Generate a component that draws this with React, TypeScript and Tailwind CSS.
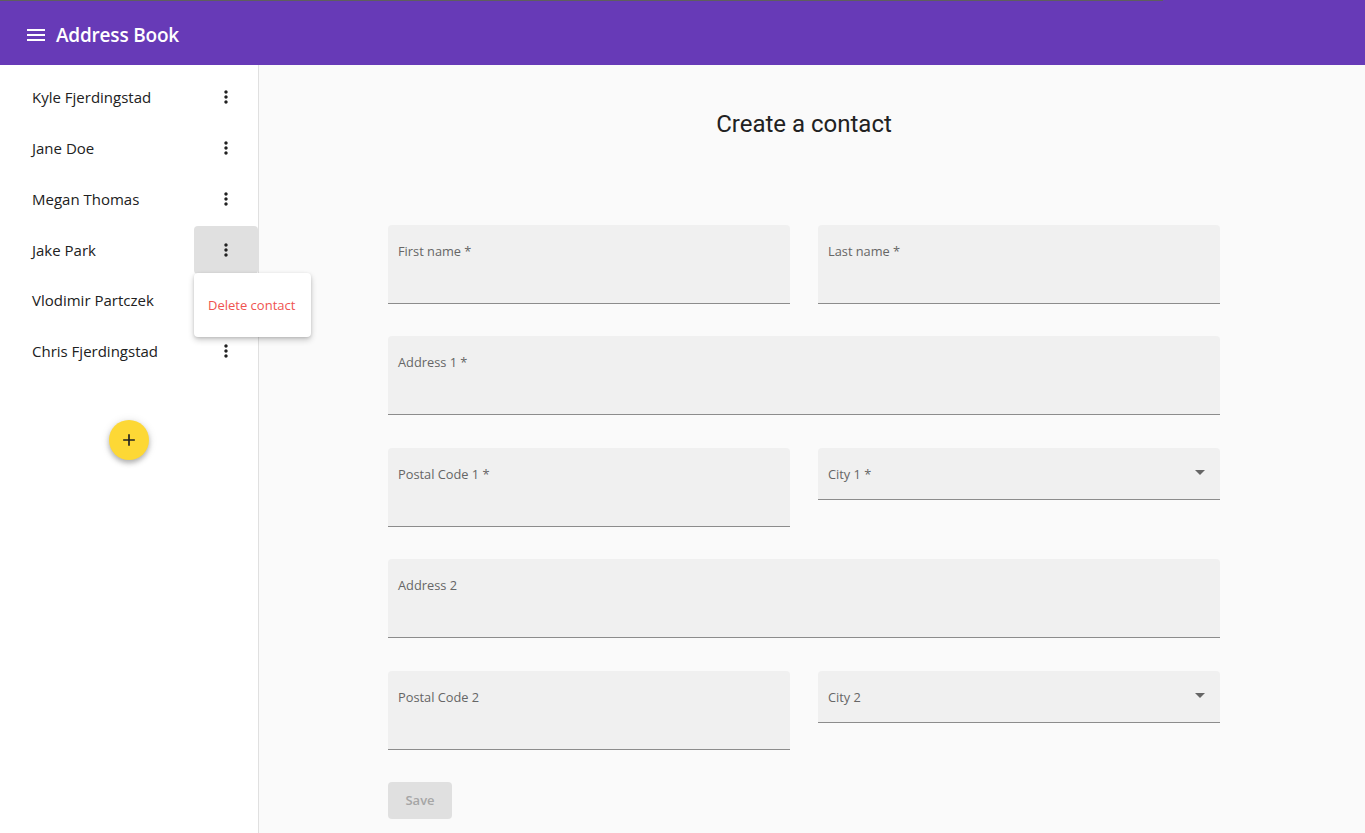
import React from "react";

const CONTACTS = [
  "Kyle Fjerdingstad",
  "Jane Doe",
  "Megan Thomas",
  "Jake Park",
  "Vlodimir Partczek",
  "Chris Fjerdingstad",
];

const SANS = "font-['Open_Sans',sans-serif]";

function MoreVert() {
  return (
    <svg width="20" height="20" viewBox="0 0 24 24" fill="#212121">
      <path d="M12 8c1.1 0 2-.9 2-2s-.9-2-2-2-2 .9-2 2 .9 2 2 2zm0 2c-1.1 0-2 .9-2 2s.9 2 2 2 2-.9 2-2-.9-2-2-2zm0 6c-1.1 0-2 .9-2 2s.9 2 2 2 2-.9 2-2-.9-2-2-2z" />
    </svg>
  );
}

function TextField({ label }: { label: string }) {
  return (
    <div className="h-[79px] rounded-t-[4px] bg-[#f0f0f0] border-b border-[#8c8c8c] px-[10px] pt-[13px]">
      <span className="text-[12.8px] text-[#666666]">{label}</span>
    </div>
  );
}

function SelectField({ label }: { label: string }) {
  return (
    <div className="relative h-[52px] rounded-t-[4px] bg-[#f0f0f0] border-b border-[#8c8c8c] px-[10px] pt-[13px]">
      <span className="text-[12.8px] text-[#666666]">{label}</span>
      <svg
        className="absolute right-[8px] top-[12px]"
        width="24"
        height="24"
        viewBox="0 0 24 24"
        fill="#666666"
      >
        <path d="M7 10l5 5 5-5z" />
      </svg>
    </div>
  );
}

export default function App() {
  return (
    <div className={`min-h-screen h-[833px] flex flex-col bg-[#fafafa] ${SANS}`}>
      {/* Header */}
      <header className="h-[65px] shrink-0 bg-[#673ab7] flex flex-col">
        <div className="h-px w-[1163px] bg-[#5e5e5e]" />
        <div className="flex-1 flex items-center pl-[24px] pt-[4px]">
          <svg width="24" height="24" viewBox="0 0 24 24" fill="#ffffff">
            <path d="M3 18h18v-2H3v2zm0-5h18v-2H3v2zm0-7v2h18V6H3z" />
          </svg>
          <span className="ml-[8px] text-[19px] font-semibold text-white tracking-[-0.2px]">
            Address Book
          </span>
        </div>
      </header>

      <div className="flex flex-1 min-h-0">
        {/* Sidebar */}
        <aside className="w-[259px] shrink-0 bg-white border-r border-[#e0e0e0] pt-[7px] flex flex-col">
          {CONTACTS.map((name) => {
            const open = name === "Jake Park";
            return (
              <div key={name} className="relative h-[50.8px] flex items-center pl-[32px]">
                <span className="flex-1 text-[15px] text-[#212121]">{name}</span>
                <button
                  className={`w-[64px] h-[48px] flex items-center justify-center rounded-[4px] ${
                    open ? "bg-[#e0e0e0]" : ""
                  }`}
                >
                  <MoreVert />
                </button>
                {open && (
                  <div className="absolute left-[194px] top-[49px] z-10 w-[117px] h-[64px] bg-white rounded-[4px] shadow-[0_3px_6px_rgba(0,0,0,0.2),0_1px_3px_rgba(0,0,0,0.12)] flex items-center pl-[14px]">
                    <span className="text-[13px] text-[#ef5350] whitespace-nowrap">
                      Delete contact
                    </span>
                  </div>
                )}
              </div>
            );
          })}
          <div className="flex justify-center mt-[43px]">
            <button className="w-[40px] h-[40px] rounded-full bg-[#fdd835] shadow-[0_3px_5px_rgba(0,0,0,0.25),0_1px_10px_rgba(0,0,0,0.12)] flex items-center justify-center">
              <svg width="20" height="20" viewBox="0 0 24 24" fill="#212121">
                <path d="M19 13h-6v6h-2v-6H5v-2h6V5h2v6h6v2z" />
              </svg>
            </button>
          </div>
        </aside>

        {/* Main */}
        <main className="flex-1 bg-[#fafafa] pl-[129px] pt-[43px]">
          <div className="w-[832px]">
            <h1 className="text-center font-['Roboto',sans-serif] text-[24px] leading-[32px] text-[#212121]">
              Create a contact
            </h1>
            <div className="mt-[85px] flex flex-col gap-[32.4px]">
              <div className="grid grid-cols-2 gap-x-[28px] items-start">
                <TextField label="First name *" />
                <TextField label="Last name *" />
              </div>
              <TextField label="Address 1 *" />
              <div className="grid grid-cols-2 gap-x-[28px] items-start">
                <TextField label="Postal Code 1 *" />
                <SelectField label="City 1 *" />
              </div>
              <TextField label="Address 2" />
              <div className="grid grid-cols-2 gap-x-[28px] items-start">
                <TextField label="Postal Code 2" />
                <SelectField label="City 2" />
              </div>
              <div>
                <button
                  disabled
                  className="w-[64px] h-[37px] rounded-[4px] bg-[#e0e0e0] text-[13px] font-semibold text-[#a6a6a6]"
                >
                  Save
                </button>
              </div>
            </div>
          </div>
        </main>
      </div>
    </div>
  );
}
